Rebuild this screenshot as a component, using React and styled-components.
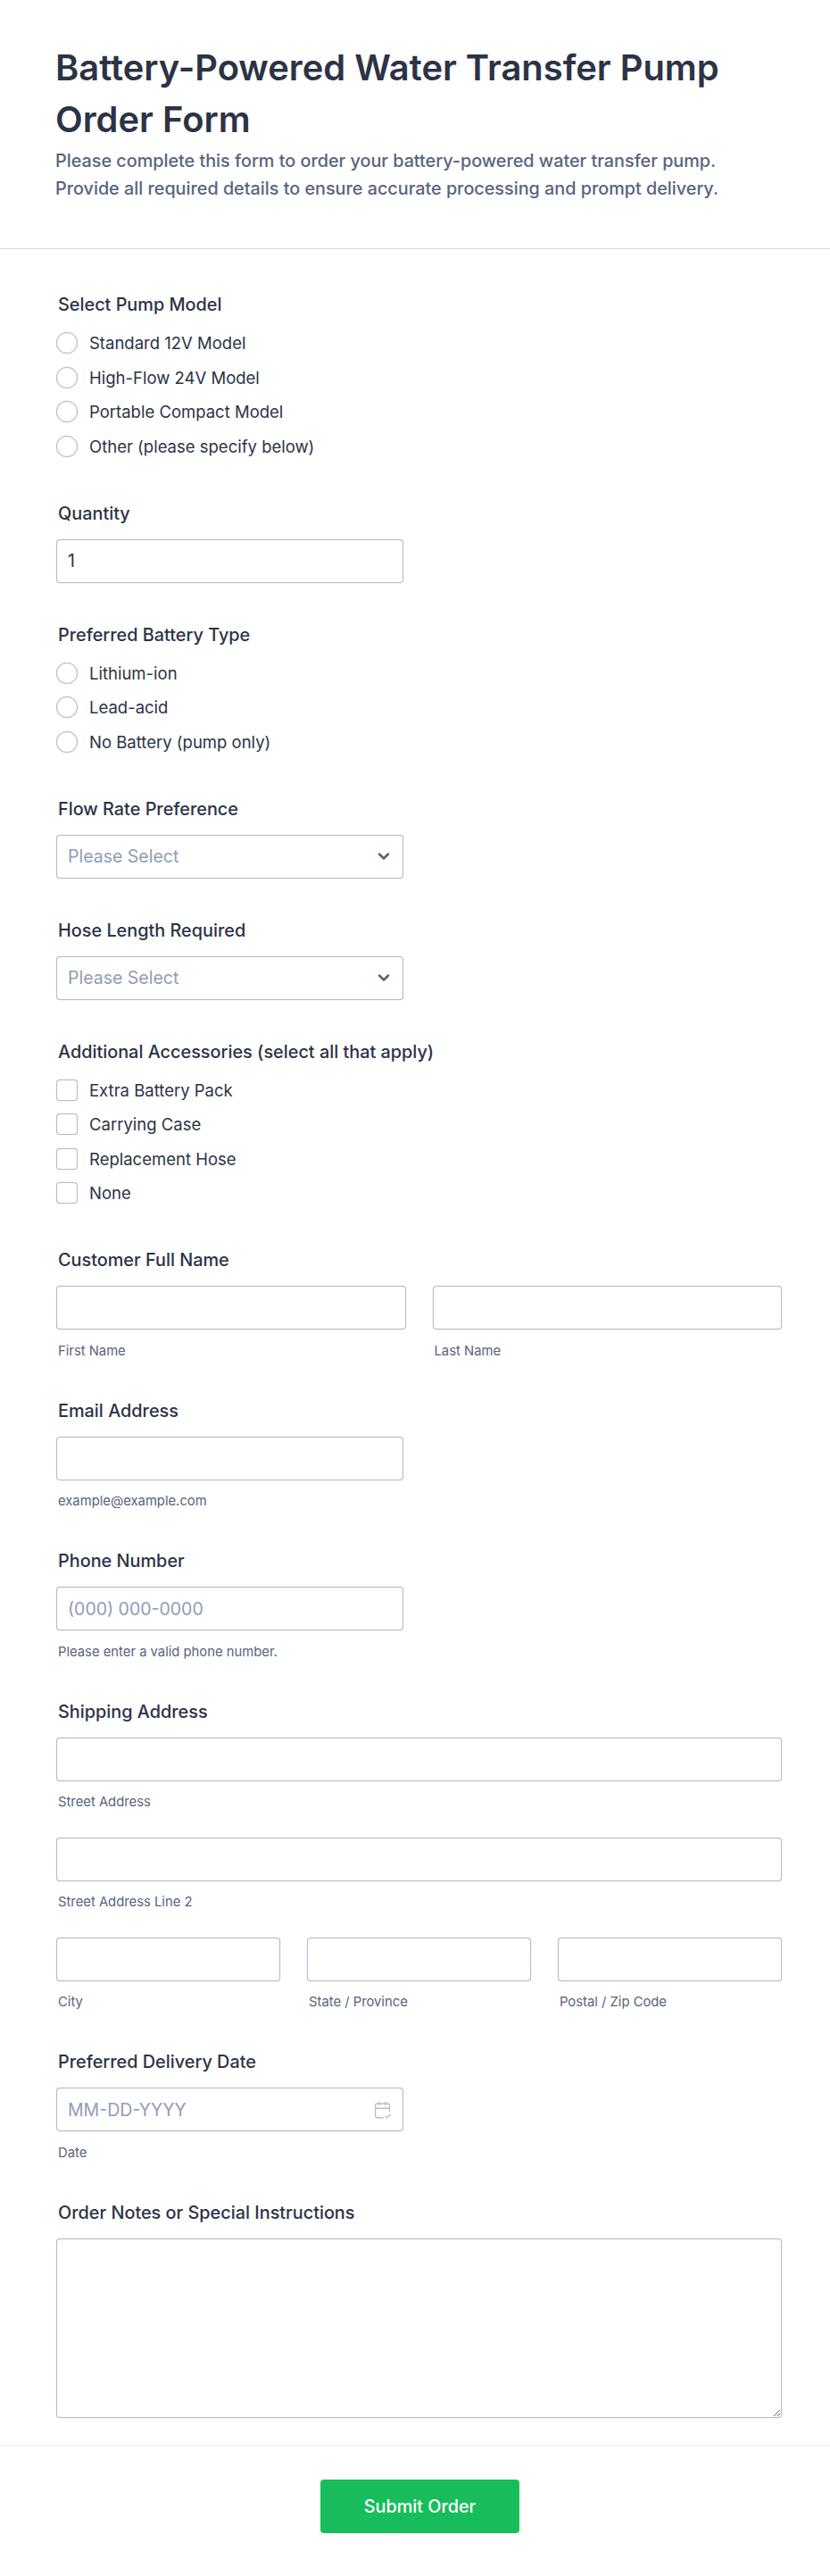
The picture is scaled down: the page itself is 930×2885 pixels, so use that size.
import styled, { createGlobalStyle } from "styled-components";
import { CalendarCheck2, ChevronDown } from "lucide-react";

const GlobalStyle = createGlobalStyle`
  html, body {
    margin: 0;
    padding: 0;
    background: #fff;
  }
  * {
    box-sizing: border-box;
  }
  body {
    font-family: Inter, "Liberation Sans", sans-serif;
    color: #2c3345;
  }
`;

const Page = styled.form`
  width: 930px;
  min-height: 2885px;
`;

const Header = styled.header`
  padding: 47px 62px 0;
  height: 279px;
  border-bottom: 1px solid #d3d6e2;
`;

const Title = styled.h1`
  margin: 0 0 2px;
  font-size: 39.9px;
  line-height: 58px;
  font-weight: 600;
  color: #2c3345;
`;

const Subtitle = styled.p`
  margin: 0;
  font-size: 19.8px;
  line-height: 31px;
  font-weight: 500;
  color: #57647e;
`;

const Fields = styled.div`
  display: flex;
  flex-direction: column;
  gap: 46px;
  padding: 50px 54px 30px 63px;
`;

const Field = styled.section`
  display: flex;
  flex-direction: column;
`;

const Label = styled.div`
  font-size: 19.85px;
  line-height: 24px;
  font-weight: 500;
  color: #2c3345;
  padding-left: 2px;
  margin-bottom: 17px;
`;

const Options = styled.div`
  display: flex;
  flex-direction: column;
  gap: 14.5px;
  padding: 2px 0 5px;
`;

const Option = styled.label`
  display: flex;
  align-items: center;
  gap: 13px;
  font-size: 18.5px;
  line-height: 24px;
  color: #2c3345;
`;

const Choice = styled.input`
  appearance: none;
  flex: none;
  width: 24px;
  height: 24px;
  margin: 0;
  background: #fff;
  border: 1px solid #b5bac7;
  box-shadow: 0 0 1px #b5bac7;
  border-radius: ${(props) => (props.type === "radio" ? "50%" : "4px")};
`;

const inputBase = `
  display: block;
  width: 100%;
  height: 49px;
  padding: 0 12px;
  font-family: Inter, "Liberation Sans", sans-serif;
  font-size: 19.5px;
  color: #2c3345;
  background: #fff;
  border: 1px solid #b5bac7;
  box-shadow: 0 0 1px #b5bac7;
  border-radius: 4px;
  outline: none;
  &::placeholder {
    color: #8f9db5;
    opacity: 1;
  }
`;

const TextInput = styled.input`
  ${inputBase}
`;

const Select = styled.select`
  ${inputBase}
  appearance: none;
  color: #8f9db5;
`;

const Notes = styled.textarea`
  ${inputBase}
  height: 201px;
`;

const Short = styled.div`
  position: relative;
  width: 389px;
`;

const FieldIcon = styled.span`
  position: absolute;
  top: 50%;
  right: ${(props) => props.$right}px;
  display: flex;
  transform: translateY(-50%);
  color: ${(props) => props.$color};
  pointer-events: none;
`;

const Row = styled.div`
  display: grid;
  grid-template-columns: repeat(${(props) => props.$cols}, 1fr);
  column-gap: ${(props) => props.$gap}px;
`;

const Stack = styled.div`
  display: flex;
  flex-direction: column;
  gap: 30.5px;
`;

const Hint = styled.div`
  margin-top: 15.5px;
  padding-left: 2px;
  font-size: 14.8px;
  line-height: 17px;
  color: #57647e;
`;

const Footer = styled.footer`
  display: flex;
  justify-content: center;
  padding: 38px 0 0 11px;
  border-top: 1px solid #eaebf2;
`;

const SubmitButton = styled.button`
  width: 223px;
  height: 60px;
  font-family: Inter, "Liberation Sans", sans-serif;
  font-size: 19.8px;
  font-weight: 500;
  color: #fff;
  background: #18bd5b;
  border: 0;
  border-radius: 4px;
`;

const models = [
  "Standard 12V Model",
  "High-Flow 24V Model",
  "Portable Compact Model",
  "Other (please specify below)",
];
const batteries = ["Lithium-ion", "Lead-acid", "No Battery (pump only)"];
const accessories = ["Extra Battery Pack", "Carrying Case", "Replacement Hose", "None"];

function ChoiceGroup({ label, type, name, items }) {
  return (
    <Field>
      <Label>{label}</Label>
      <Options>
        {items.map((item) => (
          <Option key={item}>
            <Choice type={type} name={name} />
            {item}
          </Option>
        ))}
      </Options>
    </Field>
  );
}

function SelectField({ label }) {
  return (
    <Field>
      <Label>{label}</Label>
      <Short>
        <Select defaultValue="">
          <option value="" disabled>
            Please Select
          </option>
        </Select>
        <FieldIcon $right={12} $color="#57647e">
          <ChevronDown size={20} strokeWidth={3} />
        </FieldIcon>
      </Short>
    </Field>
  );
}

function Labelled({ hint, placeholder }) {
  return (
    <div>
      <TextInput placeholder={placeholder} />
      <Hint>{hint}</Hint>
    </div>
  );
}

export default function App() {
  return (
    <Page>
      <GlobalStyle />
      <Header>
        <Title>Battery-Powered Water Transfer Pump Order Form</Title>
        <Subtitle>
          Please complete this form to order your battery-powered water transfer pump.
          <br />
          Provide all required details to ensure accurate processing and prompt delivery.
        </Subtitle>
      </Header>

      <Fields>
        <ChoiceGroup label="Select Pump Model" type="radio" name="model" items={models} />

        <Field>
          <Label>Quantity</Label>
          <Short>
            <TextInput defaultValue="1" />
          </Short>
        </Field>

        <ChoiceGroup label="Preferred Battery Type" type="radio" name="battery" items={batteries} />
        <SelectField label="Flow Rate Preference" />
        <SelectField label="Hose Length Required" />
        <ChoiceGroup
          label="Additional Accessories (select all that apply)"
          type="checkbox"
          name="accessories"
          items={accessories}
        />

        <Field>
          <Label>Customer Full Name</Label>
          <Row $cols={2} $gap={30}>
            <Labelled hint="First Name" />
            <Labelled hint="Last Name" />
          </Row>
        </Field>

        <Field>
          <Label>Email Address</Label>
          <Short>
            <Labelled hint="example@example.com" />
          </Short>
        </Field>

        <Field>
          <Label>Phone Number</Label>
          <Short>
            <Labelled hint="Please enter a valid phone number." placeholder="(000) 000-0000" />
          </Short>
        </Field>

        <Field>
          <Label>Shipping Address</Label>
          <Stack>
            <Labelled hint="Street Address" />
            <Labelled hint="Street Address Line 2" />
            <Row $cols={3} $gap={30}>
              <Labelled hint="City" />
              <Labelled hint="State / Province" />
              <Labelled hint="Postal / Zip Code" />
            </Row>
          </Stack>
        </Field>

        <Field>
          <Label>Preferred Delivery Date</Label>
          <Short>
            <TextInput placeholder="MM-DD-YYYY" />
            <FieldIcon $right={13} $color="#b8bdc9">
              <CalendarCheck2 size={21} strokeWidth={1.5} />
            </FieldIcon>
          </Short>
          <Hint>Date</Hint>
        </Field>

        <Field>
          <Label>Order Notes or Special Instructions</Label>
          <Notes />
        </Field>
      </Fields>

      <Footer>
        <SubmitButton type="button">Submit Order</SubmitButton>
      </Footer>
    </Page>
  );
}
